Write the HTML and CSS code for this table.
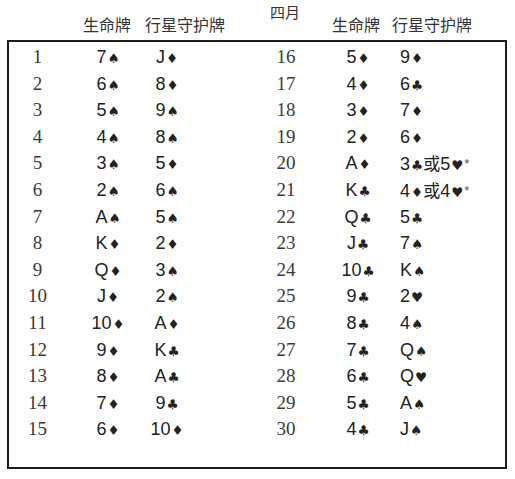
FILE: index.html
```html
<!DOCTYPE html>
<html lang="zh">
<head>
<meta charset="utf-8">
<title>四月</title>
<link rel="stylesheet" href="styles.css">
</head>
<body>
<div class="head">
  <span class="h h1">生命牌</span>
  <span class="h h2">行星守护牌</span>
  <span class="month">四月</span>
  <span class="h h4">生命牌</span>
  <span class="h h5">行星守护牌</span>
</div>
<div class="box">
  <div class="half left">
    <div class="row"><span class="n">1</span><span class="c">7<i>♠</i></span><span class="c">J<i>♦</i></span></div>
    <div class="row"><span class="n">2</span><span class="c">6<i>♠</i></span><span class="c">8<i>♦</i></span></div>
    <div class="row"><span class="n">3</span><span class="c">5<i>♠</i></span><span class="c">9<i>♠</i></span></div>
    <div class="row"><span class="n">4</span><span class="c">4<i>♠</i></span><span class="c">8<i>♠</i></span></div>
    <div class="row"><span class="n">5</span><span class="c">3<i>♠</i></span><span class="c">5<i>♦</i></span></div>
    <div class="row"><span class="n">6</span><span class="c">2<i>♠</i></span><span class="c">6<i>♠</i></span></div>
    <div class="row"><span class="n">7</span><span class="c">A<i>♠</i></span><span class="c">5<i>♠</i></span></div>
    <div class="row"><span class="n">8</span><span class="c">K<i>♦</i></span><span class="c">2<i>♦</i></span></div>
    <div class="row"><span class="n">9</span><span class="c">Q<i>♦</i></span><span class="c">3<i>♠</i></span></div>
    <div class="row"><span class="n">10</span><span class="c">J<i>♦</i></span><span class="c">2<i>♠</i></span></div>
    <div class="row"><span class="n">11</span><span class="c">10<i>♦</i></span><span class="c">A<i>♦</i></span></div>
    <div class="row"><span class="n">12</span><span class="c">9<i>♦</i></span><span class="c">K<i>♣</i></span></div>
    <div class="row"><span class="n">13</span><span class="c">8<i>♦</i></span><span class="c">A<i>♣</i></span></div>
    <div class="row"><span class="n">14</span><span class="c">7<i>♦</i></span><span class="c">9<i>♣</i></span></div>
    <div class="row"><span class="n">15</span><span class="c">6<i>♦</i></span><span class="c">10<i>♦</i></span></div>
  </div>
  <div class="half right">
    <div class="row"><span class="n">16</span><span class="c life">5<i>♦</i></span><span class="c g">9<i>♦</i></span></div>
    <div class="row"><span class="n">17</span><span class="c life">4<i>♦</i></span><span class="c g">6<i>♣</i></span></div>
    <div class="row"><span class="n">18</span><span class="c life">3<i>♦</i></span><span class="c g">7<i>♦</i></span></div>
    <div class="row"><span class="n">19</span><span class="c life">2<i>♦</i></span><span class="c g">6<i>♦</i></span></div>
    <div class="row"><span class="n">20</span><span class="c life">A<i>♦</i></span><span class="c g">3<i>♣</i><b>或</b>5<i>♥</i><sup>*</sup></span></div>
    <div class="row"><span class="n">21</span><span class="c life">K<i>♣</i></span><span class="c g">4<i>♦</i><b>或</b>4<i>♥</i><sup>*</sup></span></div>
    <div class="row"><span class="n">22</span><span class="c life">Q<i>♣</i></span><span class="c g">5<i>♣</i></span></div>
    <div class="row"><span class="n">23</span><span class="c life">J<i>♣</i></span><span class="c g">7<i>♠</i></span></div>
    <div class="row"><span class="n">24</span><span class="c life">10<i>♣</i></span><span class="c g">K<i>♠</i></span></div>
    <div class="row"><span class="n">25</span><span class="c life">9<i>♣</i></span><span class="c g">2<i>♥</i></span></div>
    <div class="row"><span class="n">26</span><span class="c life">8<i>♣</i></span><span class="c g">4<i>♠</i></span></div>
    <div class="row"><span class="n">27</span><span class="c life">7<i>♣</i></span><span class="c g">Q<i>♠</i></span></div>
    <div class="row"><span class="n">28</span><span class="c life">6<i>♣</i></span><span class="c g">Q<i>♥</i></span></div>
    <div class="row"><span class="n">29</span><span class="c life">5<i>♣</i></span><span class="c g">A<i>♠</i></span></div>
    <div class="row"><span class="n">30</span><span class="c life">4<i>♣</i></span><span class="c g">J<i>♠</i></span></div>
  </div>
</div>
</body>
</html>
```

FILE: styles.css
```css
* { box-sizing: border-box; }
html, body { margin: 0; padding: 0; background: #fff; }
body {
  width: 515px;
  height: 479px;
  overflow: hidden;
  color: #222;
  font-family: "Liberation Sans", "Noto Sans CJK SC", sans-serif;
}
.head {
  display: flex;
  align-items: flex-start;
  height: 40px;
  font-family: "Noto Sans CJK SC", sans-serif;
  font-size: 16px;
  line-height: 16px;
  color: #333;
}
.h { margin-top: 16px; white-space: nowrap; }
.h1 { margin-left: 83px; }
.h2 { margin-left: 14px; }
.month { margin-left: 45px; margin-top: 4px; font-size: 15px; line-height: 16px; }
.h4 { margin-left: 32px; }
.h5 { margin-left: 12px; }

.box {
  margin-left: 7px;
  width: 500px;
  height: 429px;
  border: 2px solid #1c1c1c;
  display: flex;
  padding-top: 2px;
}
.half.left { width: 251px; }
.half.right { flex: 1; }
.row {
  display: grid;
  height: 26.6px;
  line-height: 26.6px;
  white-space: nowrap;
}
.left .row { grid-template-columns: 57px 84px 34px; }
.right .row { grid-template-columns: 52px 88px 1fr; }
.n {
  text-align: center;
  font-family: "Liberation Serif", serif;
  font-size: 19px;
  color: #3a3a3a;
}
.c {
  text-align: center;
  font-size: 18px;
  color: #222;
}
.c.life { padding-left: 4px; }
.c.g { text-align: left; }
.c i {
  font-style: normal;
  font-family: "DejaVu Sans", sans-serif;
  font-size: 13.5px;
  margin-left: 1px;
}
.c b {
  font-weight: normal;
  font-family: "Noto Sans CJK SC", sans-serif;
  font-size: 17px;
  margin-left: 0;
}
.c sup {
  font-size: 13px;
  line-height: 0;
  vertical-align: 2px;
  color: #555;
  margin-left: 1px;
}
```
